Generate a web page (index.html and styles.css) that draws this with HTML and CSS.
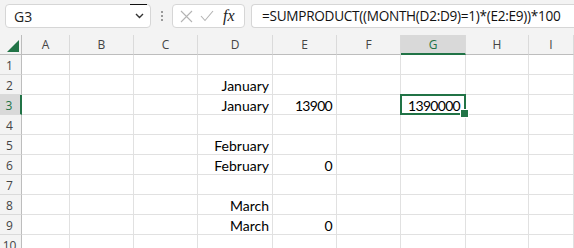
FILE: index.html
```html
<!DOCTYPE html>
<html lang="en">
<head>
    <meta charset="UTF-8">
    <title>Book1 - Excel</title>
    <link rel="stylesheet" href="styles.css">
</head>
<body>
    <div class="formula-bar">
        <div class="name-box">
            <span class="name-value">G3</span>
            <span class="name-mark"></span>
            <svg class="chevron" width="9" height="6" viewBox="0 0 9 6"><path d="M1 1 L4.5 4.5 L8 1" fill="none" stroke="#333" stroke-width="1.4"/></svg>
        </div>
        <div class="grip"><i></i><i></i><i></i></div>
        <div class="fx-box">
            <svg width="13" height="13" viewBox="0 0 13 13"><path d="M1 1 L12 12 M12 1 L1 12" stroke="#b4b4b4" stroke-width="1.1" fill="none"/></svg>
            <svg width="14" height="12" viewBox="0 0 14 12"><path d="M1 6 L5 10.5 L13 1" stroke="#b4b4b4" stroke-width="1.1" fill="none"/></svg>
            <span class="fx">fx</span>
        </div>
        <div class="formula-input">=SUMPRODUCT((MONTH(D2:D9)=1)*(E2:E9))*100</div>
    </div>

    <div class="sheet">
        <div class="corner"><span class="select-all"></span></div>
        <div class="col-head">A</div>
        <div class="col-head">B</div>
        <div class="col-head">C</div>
        <div class="col-head">D</div>
        <div class="col-head">E</div>
        <div class="col-head">F</div>
        <div class="col-head active">G</div>
        <div class="col-head">H</div>
        <div class="col-head">I</div>

        <div class="row-head">1</div>
        <div class="cell"></div><div class="cell"></div><div class="cell"></div><div class="cell"></div><div class="cell"></div><div class="cell"></div><div class="cell"></div><div class="cell"></div><div class="cell"></div>

        <div class="row-head">2</div>
        <div class="cell"></div><div class="cell"></div><div class="cell"></div><div class="cell">January</div><div class="cell"></div><div class="cell"></div><div class="cell"></div><div class="cell"></div><div class="cell"></div>

        <div class="row-head active">3</div>
        <div class="cell"></div><div class="cell"></div><div class="cell"></div><div class="cell">January</div><div class="cell num">13900</div><div class="cell"></div><div class="cell num selected">1390000</div><div class="cell"></div><div class="cell"></div>

        <div class="row-head">4</div>
        <div class="cell"></div><div class="cell"></div><div class="cell"></div><div class="cell"></div><div class="cell"></div><div class="cell"></div><div class="cell"></div><div class="cell"></div><div class="cell"></div>

        <div class="row-head">5</div>
        <div class="cell"></div><div class="cell"></div><div class="cell"></div><div class="cell">February</div><div class="cell"></div><div class="cell"></div><div class="cell"></div><div class="cell"></div><div class="cell"></div>

        <div class="row-head">6</div>
        <div class="cell"></div><div class="cell"></div><div class="cell"></div><div class="cell">February</div><div class="cell num">0</div><div class="cell"></div><div class="cell"></div><div class="cell"></div><div class="cell"></div>

        <div class="row-head">7</div>
        <div class="cell"></div><div class="cell"></div><div class="cell"></div><div class="cell"></div><div class="cell"></div><div class="cell"></div><div class="cell"></div><div class="cell"></div><div class="cell"></div>

        <div class="row-head">8</div>
        <div class="cell"></div><div class="cell"></div><div class="cell"></div><div class="cell">March</div><div class="cell"></div><div class="cell"></div><div class="cell"></div><div class="cell"></div><div class="cell"></div>

        <div class="row-head">9</div>
        <div class="cell"></div><div class="cell"></div><div class="cell"></div><div class="cell">March</div><div class="cell num">0</div><div class="cell"></div><div class="cell"></div><div class="cell"></div><div class="cell"></div>

        <div class="row-head">10</div>
        <div class="cell"></div><div class="cell"></div><div class="cell"></div><div class="cell"></div><div class="cell"></div><div class="cell"></div><div class="cell"></div><div class="cell"></div><div class="cell"></div>
    </div>
</body>
</html>
```

FILE: styles.css
```css
* {
    box-sizing: border-box;
}

body {
    margin: 0;
    background: #fff;
    font-family: "Open Sans", "Noto Sans", sans-serif;
    overflow: hidden;
    height: 248px;
}

/* top bar */
.formula-bar {
    display: flex;
    align-items: center;
    height: 35px;
    padding: 0 0 3px 5px;
    background: #f3f3f3;
}

.name-box {
    position: relative;
    display: flex;
    align-items: center;
    justify-content: space-between;
    width: 146px;
    height: 24px;
    padding: 0 6px 0 8px;
    background: #fff;
    border: 1px solid #d6d6d6;
    border-radius: 4px;
    font-size: 14px;
    color: #222;
}

.name-mark {
    position: absolute;
    top: -1px;
    right: 3px;
    width: 17px;
    height: 1px;
    background: #111;
}

.grip {
    display: flex;
    flex-direction: column;
    gap: 2px;
    width: 21px;
    align-items: center;
}

.grip i {
    display: block;
    width: 2px;
    height: 2px;
    background: #9a9a9a;
}

.fx-box {
    display: flex;
    align-items: center;
    gap: 7px;
    width: 73px;
    height: 24px;
    padding: 0 4px 0 7px;
    background: #fff;
    border: 1px solid #d6d6d6;
    border-radius: 4px;
}

.fx {
    margin-left: 2px;
    font-family: "Liberation Serif", serif;
    font-style: italic;
    font-size: 16px;
    color: #222;
}

.formula-input {
    flex: 1;
    height: 24px;
    margin-left: 6px;
    padding: 1px 0 0 10px;
    background: #fff;
    border: 1px solid #d6d6d6;
    border-right: 0;
    border-radius: 4px 0 0 4px;
    font-size: 13.6px;
    line-height: 20px;
    color: #111;
    white-space: nowrap;
    letter-spacing: -0.28px;
}

/* grid */
.sheet {
    display: grid;
    grid-template-columns: 22px 48px 64px 64px 75px 64px 64px 65px 63px 45px;
    grid-auto-rows: 20px;
}

.corner,
.col-head,
.row-head {
    background: #f3f3f3;
    color: #444;
    font-size: 12px;
}

.corner {
    position: relative;
    border-right: 1px solid #bdbdbd;
    border-bottom: 1px solid #bdbdbd;
}

.select-all {
    position: absolute;
    left: 7px;
    top: 5px;
    width: 12px;
    height: 12px;
    background: #217346;
    clip-path: polygon(100% 0, 100% 100%, 0 100%);
}

.col-head {
    display: flex;
    align-items: center;
    justify-content: center;
    border-right: 1px solid #dadada;
    border-bottom: 1px solid #bdbdbd;
}

.col-head.active {
    background: #d9d9d9;
    color: #217346;
    border-bottom: 2px solid #217346;
}

.row-head {
    display: flex;
    align-items: center;
    justify-content: center;
    padding: 2px 2px 0 0;
    border-right: 1px solid #bdbdbd;
    border-bottom: 1px solid #dadada;
}

.row-head.active {
    background: #d9d9d9;
    color: #217346;
    border-right: 2px solid #217346;
}

.cell {
    position: relative;
    padding: 1px 3px 0 2px;
    border-right: 1px solid #e1e1e1;
    border-bottom: 1px solid #e1e1e1;
    font-family: Lato, "Liberation Sans", sans-serif;
    font-size: 14px;
    line-height: 20px;
    text-align: right;
    color: #000;
    white-space: nowrap;
}

.cell.num {
    letter-spacing: -0.7px;
    padding-right: 4px;
}

.cell.selected {
    z-index: 1;
    padding-right: 5px;
}

.cell.selected::before {
    content: "";
    position: absolute;
    left: -1px;
    top: -1px;
    right: -1px;
    bottom: -1px;
    border: 2px solid #217346;
}

.cell.selected::after {
    content: "";
    position: absolute;
    right: -4px;
    bottom: -4px;
    width: 7px;
    height: 7px;
    background: #217346;
    border: 1px solid #fff;
}
```
